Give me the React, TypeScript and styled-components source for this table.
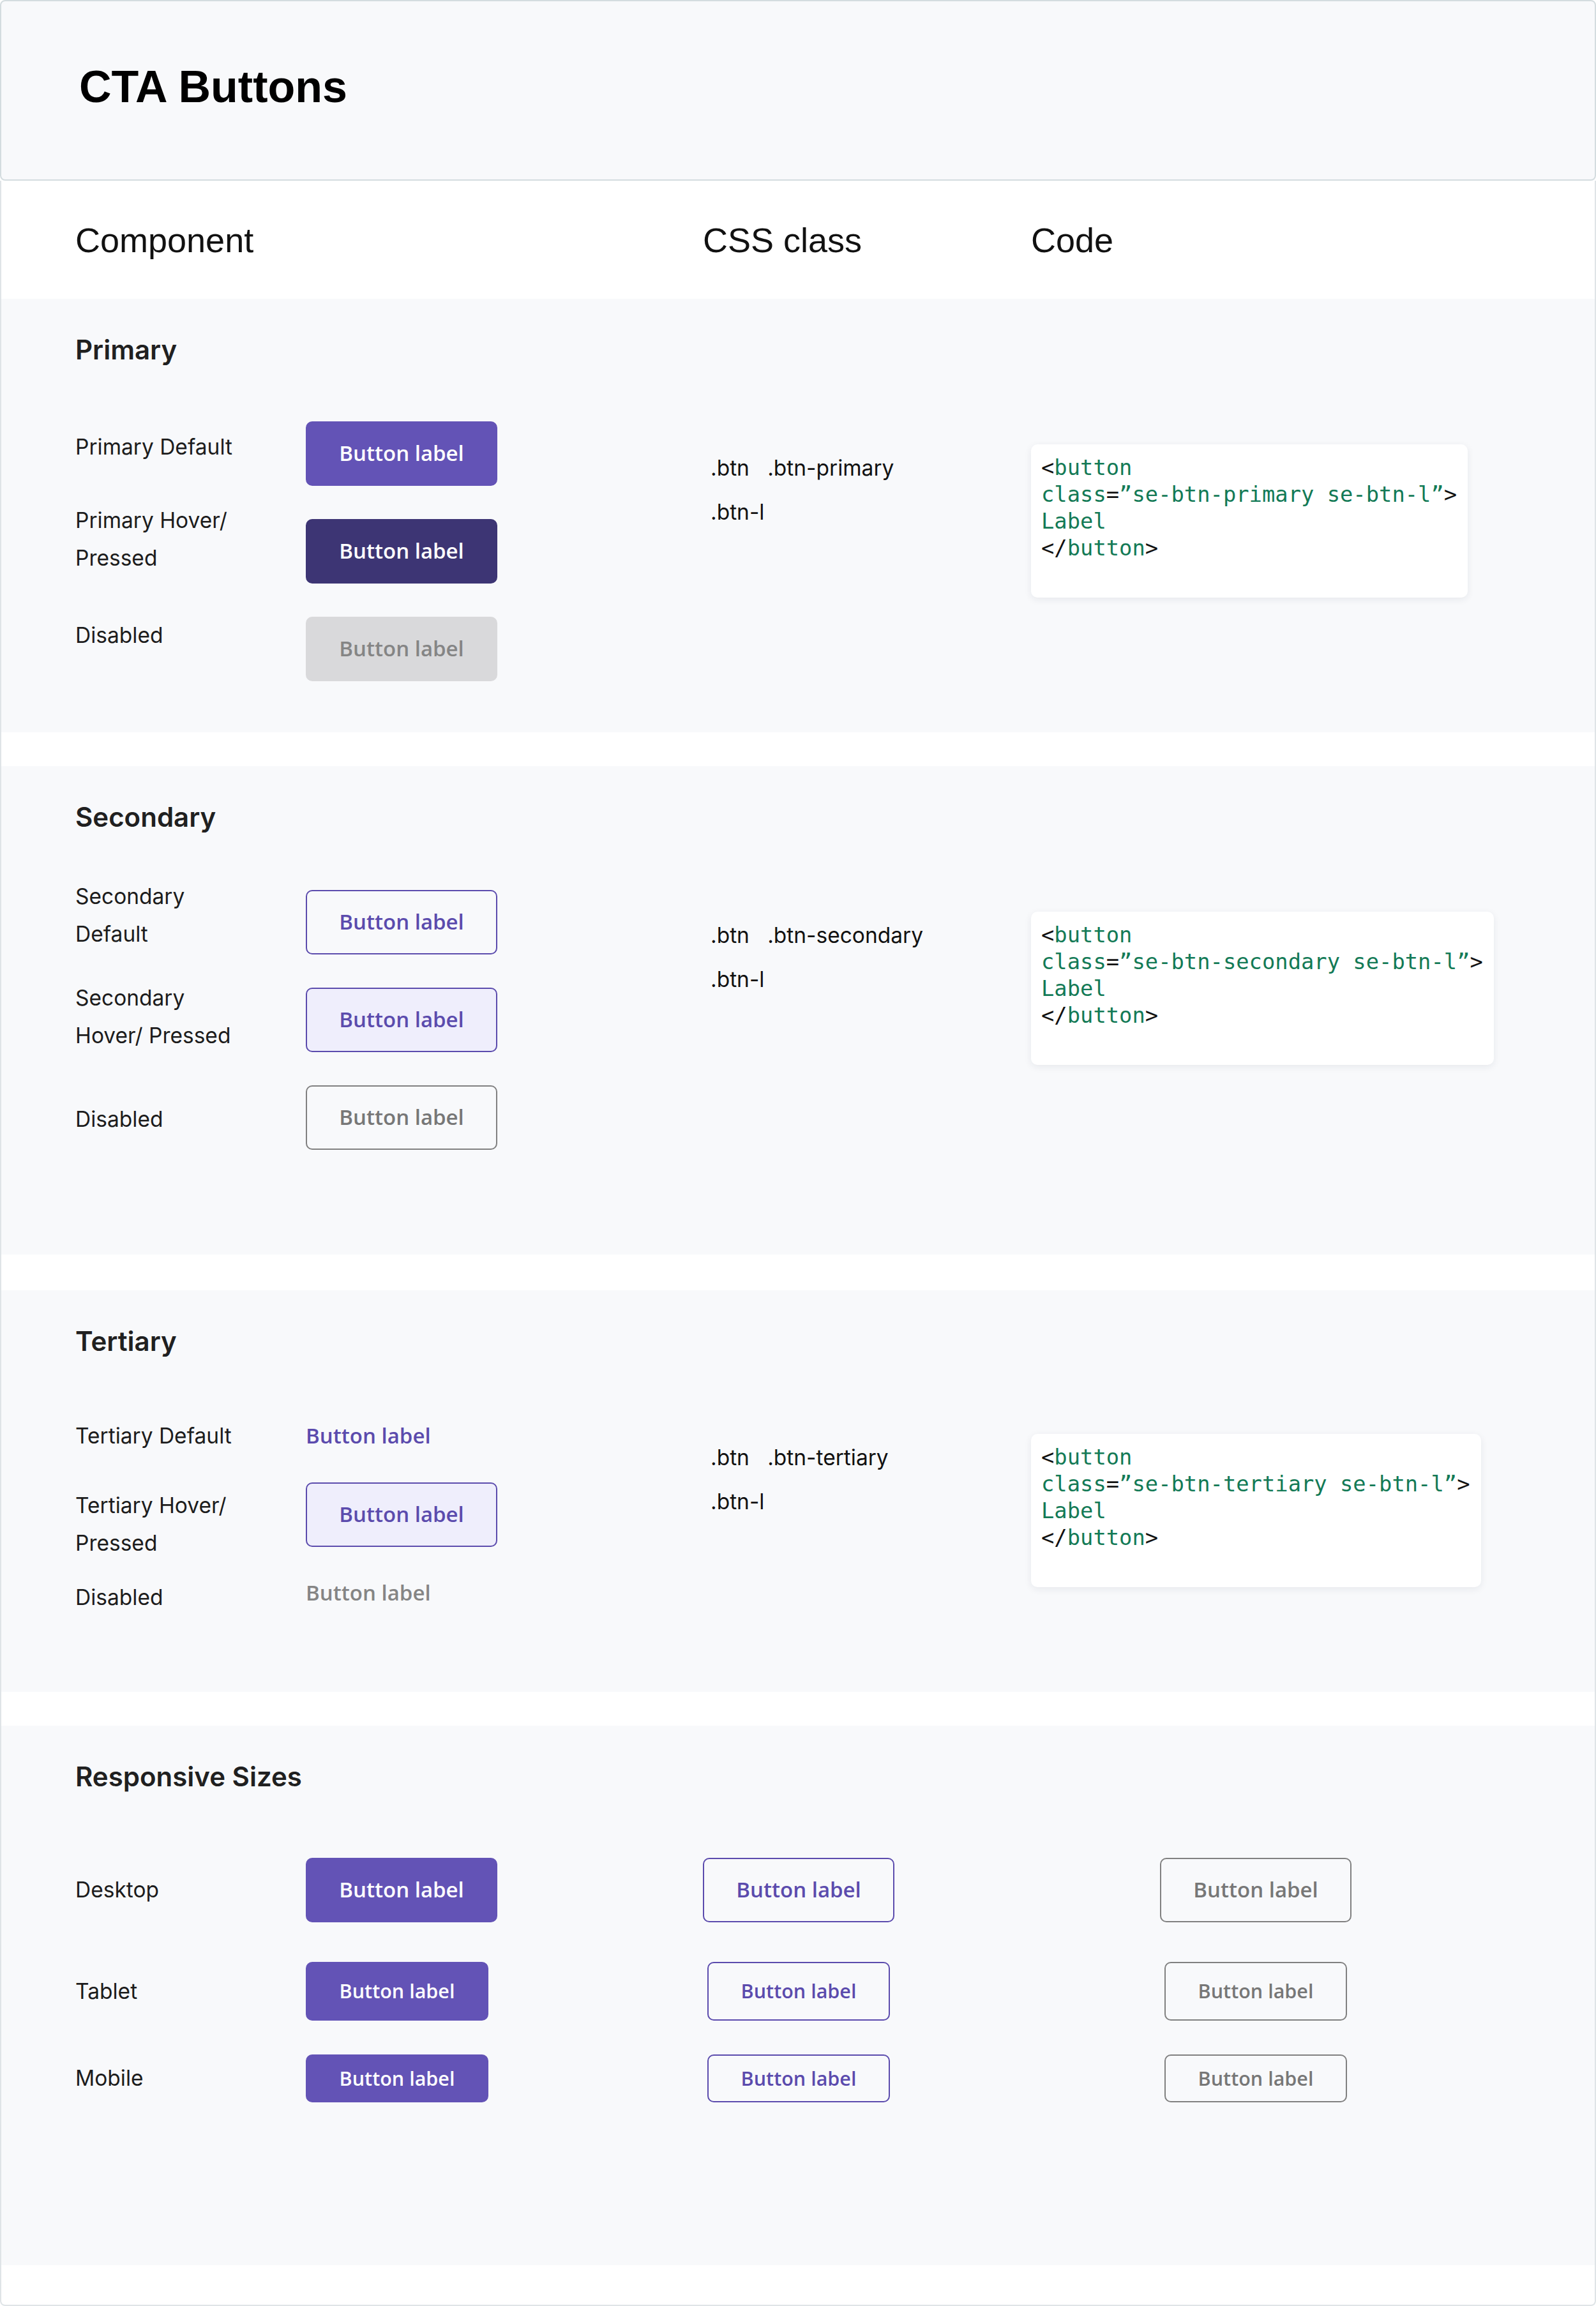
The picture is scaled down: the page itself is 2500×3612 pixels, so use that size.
import React from "react";
import styled, { createGlobalStyle, css } from "styled-components";

const PURPLE = "#6353b6";
const PURPLE_LINE = "#5b4bad";
const SECTION_BG = "#f8f9fb";

const Global = createGlobalStyle`
  html, body { margin: 0; padding: 0; background: #ffffff; }
  body { width: 2500px; font-family: Inter, "Noto Sans", sans-serif; color: #1c1c1c; }
  *, *::before, *::after { box-sizing: border-box; }
`;

const Page = styled.div`
  width: 2500px;
  display: flex;
  flex-direction: column;
`;

const Header = styled.header`
  height: 283px;
  background: ${SECTION_BG};
  border: 2px solid #d4dcdf;
  border-radius: 8px;
  display: flex;
  align-items: center;
  padding: 0 0 11px 122px;
`;

const PageTitle = styled.h1`
  margin: 0;
  font-family: "Liberation Sans", Arial, sans-serif;
  font-weight: 700;
  font-size: 70px;
  line-height: 1;
  color: #000;
`;

const Body = styled.main`
  border: 2px solid #dfe4e7;
  border-top: none;
  border-radius: 0 0 8px 8px;
  display: flex;
  flex-direction: column;
  padding-bottom: 62px;
`;

const ColumnHead = styled.div`
  height: 185px;
  display: grid;
  grid-template-columns: 983px 514px 1fr;
  align-items: center;
  padding: 0 0 0 116px;
  font-family: "Liberation Sans", Arial, sans-serif;
  font-size: 54px;
  color: #111;
`;

const Section = styled.section<{ $height: number; $gap: number }>`
  height: ${(p) => p.$height}px;
  margin-top: ${(p) => p.$gap}px;
  background: ${SECTION_BG};
  padding: 56px 0 0 116px;
  display: flex;
  flex-direction: column;
`;

const SectionTitle = styled.h2`
  margin: 0;
  font-family: Inter, sans-serif;
  font-weight: 600;
  font-size: 42px;
  line-height: 48px;
  color: #202020;
`;

const Content = styled.div<{ $top: number }>`
  margin-top: ${(p) => p.$top}px;
  display: grid;
  grid-template-columns: 983px 514px 1fr;
  align-items: start;
`;

const StateList = styled.div<{ $gap: number }>`
  display: flex;
  flex-direction: column;
  gap: ${(p) => p.$gap}px;
`;

const StateRow = styled.div<{ $height: number }>`
  height: ${(p) => p.$height}px;
  display: grid;
  grid-template-columns: 361px auto;
  grid-template-rows: ${(p) => p.$height}px;
  align-items: center;
  justify-items: start;
`;

const StateLabel = styled.div<{ $lift: number }>`
  font-family: Inter, sans-serif;
  font-size: 33.5px;
  line-height: 59px;
  color: #1c1c1c;
  align-self: center;
  margin-top: ${(p) => (p.$lift < 0 ? -2 * p.$lift : 0)}px;
  margin-bottom: ${(p) => (p.$lift > 0 ? 2 * p.$lift : 0)}px;
`;

type Variant =
  | "primary"
  | "primaryHover"
  | "primaryDisabled"
  | "secondary"
  | "secondaryHover"
  | "secondaryDisabled"
  | "tertiary"
  | "tertiaryHover"
  | "tertiaryDisabled";
type Size = "l" | "m" | "s";

const sizeMap: Record<Size, { w: number; h: number; f: number }> = {
  l: { w: 300, h: 101, f: 33 },
  m: { w: 286, h: 92, f: 30.5 },
  s: { w: 286, h: 75, f: 30.5 },
};

const textOnly = css`
  width: auto;
  height: auto;
  padding: 0;
  border-width: 0;
  background: transparent;
  justify-content: flex-start;
`;

const variantMap: Record<Variant, ReturnType<typeof css>> = {
  primary: css`
    background: ${PURPLE};
    border-color: ${PURPLE};
    color: #ffffff;
  `,
  primaryHover: css`
    background: #3d3574;
    border-color: #3d3574;
    color: #ffffff;
  `,
  primaryDisabled: css`
    background: #d9d9db;
    border-color: #d9d9db;
    color: #858585;
  `,
  secondary: css`
    background: transparent;
    border-color: ${PURPLE_LINE};
    color: ${PURPLE_LINE};
  `,
  secondaryHover: css`
    background: #efeefc;
    border-color: ${PURPLE_LINE};
    color: ${PURPLE_LINE};
  `,
  secondaryDisabled: css`
    background: transparent;
    border-color: #808080;
    color: #777777;
  `,
  tertiary: css`
    ${textOnly};
    color: ${PURPLE_LINE};
  `,
  tertiaryHover: css`
    background: #efeefc;
    border-color: ${PURPLE_LINE};
    color: ${PURPLE_LINE};
  `,
  tertiaryDisabled: css`
    ${textOnly};
    color: #858585;
  `,
};

const Btn = styled.button<{ $variant: Variant; $size: Size }>`
  display: inline-flex;
  align-items: center;
  justify-content: center;
  width: ${(p) => sizeMap[p.$size].w}px;
  height: ${(p) => sizeMap[p.$size].h}px;
  font-size: ${(p) => sizeMap[p.$size].f}px;
  font-family: "Open Sans", sans-serif;
  font-weight: 600;
  line-height: 1.3;
  border: 2px solid transparent;
  border-radius: 10px;
  padding: 0;
  margin: 0;
  cursor: pointer;
  ${(p) => variantMap[p.$variant]};
`;

const ClassList = styled.div<{ $top: number }>`
  margin-top: ${(p) => p.$top}px;
  padding-left: 12px;
  font-family: Inter, sans-serif;
  font-size: 33.5px;
  line-height: 69px;
  color: #111;
  white-space: pre;
`;

const CodeCard = styled.div<{ $top: number }>`
  margin-top: ${(p) => p.$top}px;
  justify-self: start;
  background: #ffffff;
  border-radius: 10px;
  box-shadow: 0 3px 12px rgba(30, 40, 60, 0.08);
  padding: 16px 17px 56px 16px;
  font-family: "DejaVu Sans Mono", "Liberation Mono", monospace;
  font-size: 33.8px;
  line-height: 42px;
  color: #111;
`;

const CodeLine = styled.div`
  white-space: pre;
`;

const Tok = styled.span`
  color: #137a56;
`;

const SizeGrid = styled.div<{ $top: number }>`
  margin-top: ${(p) => p.$top}px;
  display: flex;
  flex-direction: column;
`;

const SizeRow = styled.div<{ $height: number; $after: number }>`
  height: ${(p) => p.$height}px;
  margin-bottom: ${(p) => p.$after}px;
  display: grid;
  grid-template-columns: 361px 622px 300px 416px 300px;
  grid-template-rows: ${(p) => p.$height}px;
  align-items: center;
  justify-items: start;
  & > :nth-child(3),
  & > :nth-child(5) {
    justify-self: center;
  }
`;

const Spacer = styled.span``;

type StateDef = { label: string[]; variant: Variant; lift: number };
type GroupDef = {
  title: string;
  cls: string;
  code: string;
  height: number;
  gap: number;
  contentTop: number;
  rowGap: number;
  rowHeight: number;
  codeTop: number;
  states: StateDef[];
};

const groups: GroupDef[] = [
  {
    title: "Primary",
    cls: "btn-primary",
    code: "se-btn-primary",
    height: 679,
    gap: 0,
    contentTop: 87,
    rowGap: 51,
    rowHeight: 102,
    codeTop: 37,
    states: [
      { label: ["Primary Default"], variant: "primary", lift: 10 },
      { label: ["Primary Hover/", "Pressed"], variant: "primaryHover", lift: 18 },
      { label: ["Disabled"], variant: "primaryDisabled", lift: 21 },
    ],
  },
  {
    title: "Secondary",
    cls: "btn-secondary",
    code: "se-btn-secondary",
    height: 765,
    gap: 53,
    contentTop: 90,
    rowGap: 53,
    rowHeight: 100,
    codeTop: 34,
    states: [
      { label: ["Secondary", "Default"], variant: "secondary", lift: 10 },
      { label: ["Secondary", "Hover/ Pressed"], variant: "secondaryHover", lift: 4 },
      { label: ["Disabled"], variant: "secondaryDisabled", lift: -3 },
    ],
  },
  {
    title: "Tertiary",
    cls: "btn-tertiary",
    code: "se-btn-tertiary",
    height: 629,
    gap: 56,
    contentTop: 74,
    rowGap: 23,
    rowHeight: 100,
    codeTop: 47,
    states: [
      { label: ["Tertiary Default"], variant: "tertiary", lift: 0 },
      { label: ["Tertiary Hover/", "Pressed"], variant: "tertiaryHover", lift: -16 },
      { label: ["Disabled"], variant: "tertiaryDisabled", lift: -7 },
    ],
  },
];

const sizeRows: { label: string; size: Size; height: number; after: number }[] = [
  { label: "Desktop", size: "l", height: 101, after: 62 },
  { label: "Tablet", size: "m", height: 92, after: 53 },
  { label: "Mobile", size: "s", height: 75, after: 0 },
];

const Label = ({ lines, lift }: { lines: string[]; lift: number }) => (
  <StateLabel $lift={lift}>
    {lines.map((l, i) => (
      <div key={i}>{l}</div>
    ))}
  </StateLabel>
);

const CodeSample = ({ cls, top }: { cls: string; top: number }) => (
  <CodeCard $top={top}>
    <CodeLine>
      {"<"}
      <Tok>button</Tok>
    </CodeLine>
    <CodeLine>
      <Tok>class</Tok>
      {"="}
      <Tok>{`\u201D${cls} se-btn-l\u201D`}</Tok>
      {">"}
    </CodeLine>
    <CodeLine>
      <Tok>Label</Tok>
    </CodeLine>
    <CodeLine>
      {"</"}
      <Tok>button</Tok>
      {">"}
    </CodeLine>
  </CodeCard>
);

export default function App() {
  return (
    <>
      <Global />
      <Page>
        <Header>
          <PageTitle>CTA Buttons</PageTitle>
        </Header>
        <Body>
          <ColumnHead>
            <span>Component</span>
            <span>CSS class</span>
            <span>Code</span>
          </ColumnHead>

          {groups.map((g) => (
            <Section key={g.title} $height={g.height} $gap={g.gap}>
              <SectionTitle>{g.title}</SectionTitle>
              <Content $top={g.contentTop}>
                <StateList $gap={g.rowGap}>
                  {g.states.map((s, i) => (
                    <StateRow key={i} $height={g.rowHeight}>
                      <Label lines={s.label} lift={s.lift} />
                      <Btn $variant={s.variant} $size="l">
                        Button label
                      </Btn>
                    </StateRow>
                  ))}
                </StateList>
                <ClassList $top={g.codeTop + 3}>
                  <div>{`.btn   .${g.cls}`}</div>
                  <div>.btn-l</div>
                </ClassList>
                <CodeSample cls={g.code} top={g.codeTop} />
              </Content>
            </Section>
          ))}

          <Section $height={845} $gap={53}>
            <SectionTitle>Responsive Sizes</SectionTitle>
            <SizeGrid $top={103}>
              {sizeRows.map((r) => (
                <SizeRow key={r.label} $height={r.height} $after={r.after}>
                  <Label lines={[r.label]} lift={0} />
                  <Btn $variant="primary" $size={r.size}>
                    Button label
                  </Btn>
                  <Btn $variant="secondary" $size={r.size}>
                    Button label
                  </Btn>
                  <Spacer />
                  <Btn $variant="secondaryDisabled" $size={r.size}>
                    Button label
                  </Btn>
                </SizeRow>
              ))}
            </SizeGrid>
          </Section>
        </Body>
      </Page>
    </>
  );
}
